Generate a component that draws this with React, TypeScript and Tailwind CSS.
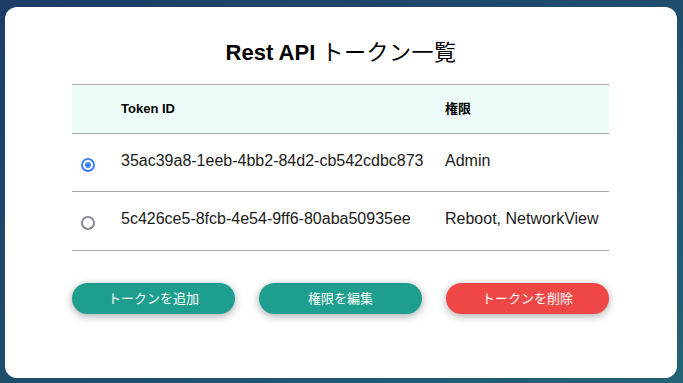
const tokens = [
  { id: "35ac39a8-1eeb-4bb2-84d2-cb542cdbc873", perms: "Admin", selected: true },
  { id: "5c426ce5-8fcb-4e54-9ff6-80aba50935ee", perms: "Reboot, NetworkView", selected: false },
];

function Radio({ checked }: { checked: boolean }) {
  return checked ? (
    <span className="flex h-[14px] w-[14px] items-center justify-center rounded-full border-2 border-[#3b82f6] bg-white">
      <span className="h-[6px] w-[6px] rounded-full bg-[#3b82f6]" />
    </span>
  ) : (
    <span className="block h-[14px] w-[14px] rounded-full border-2 border-[#8b8b96] bg-white" />
  );
}

export default function App() {
  return (
    <div
      className="h-[383px] w-[683px] bg-gradient-to-br from-[#1d3c66] via-[#1f4d6c] to-[#236478] pt-[7px] pl-[5px] pr-[6px] pb-[5px]"
      style={{ fontFamily: '"Liberation Sans", "Noto Sans CJK JP", sans-serif' }}
    >
      <div className="flex h-[371px] w-[672px] flex-col items-start rounded-xl bg-white px-[67px] pt-[31px]">
        <h1 className="h-[30px] self-center text-[22px] font-bold leading-[30px] text-black">
          Rest API <span className="font-normal tracking-[0.5px]">トークン一覧</span>
        </h1>

        <div className="mt-[16px] w-[537px] border-t border-[#a8a8a8]">
          <div className="grid h-[49px] grid-cols-[49px_324px_164px] items-center border-b border-[#a8a8a8] bg-[#effdfa] text-[13px] font-bold text-black">
            <span />
            <span>Token ID</span>
            <span>権限</span>
          </div>
          {tokens.map((t, i) => (
            <div
              key={t.id}
              className={
                "grid grid-cols-[49px_324px_164px] items-center border-b border-[#a8a8a8] text-[16px] text-[#1a1a1a] " +
                (i === 0 ? "h-[58px]" : "h-[59px]")
              }
            >
              <span className="pl-[9px] pt-[4px]">
                <Radio checked={t.selected} />
              </span>
              <span className="pb-[4px]">{t.id}</span>
              <span className="pb-[4px]">{t.perms}</span>
            </div>
          ))}
        </div>

        <div className="mt-[32px] flex w-[537px] gap-[24px]">
          <button className="h-[31px] w-[163px] rounded-full bg-[#1e9e8e] text-[13px] text-white shadow-[0_2px_8px_rgba(0,0,0,0.35)]">
            トークンを追加
          </button>
          <button className="h-[31px] w-[163px] rounded-full bg-[#1e9e8e] text-[13px] text-white shadow-[0_2px_8px_rgba(0,0,0,0.35)]">
            権限を編集
          </button>
          <button className="h-[31px] w-[163px] rounded-full bg-[#ef4646] text-[13px] text-white shadow-[0_2px_8px_rgba(0,0,0,0.35)]">
            トークンを削除
          </button>
        </div>
      </div>
    </div>
  );
}
